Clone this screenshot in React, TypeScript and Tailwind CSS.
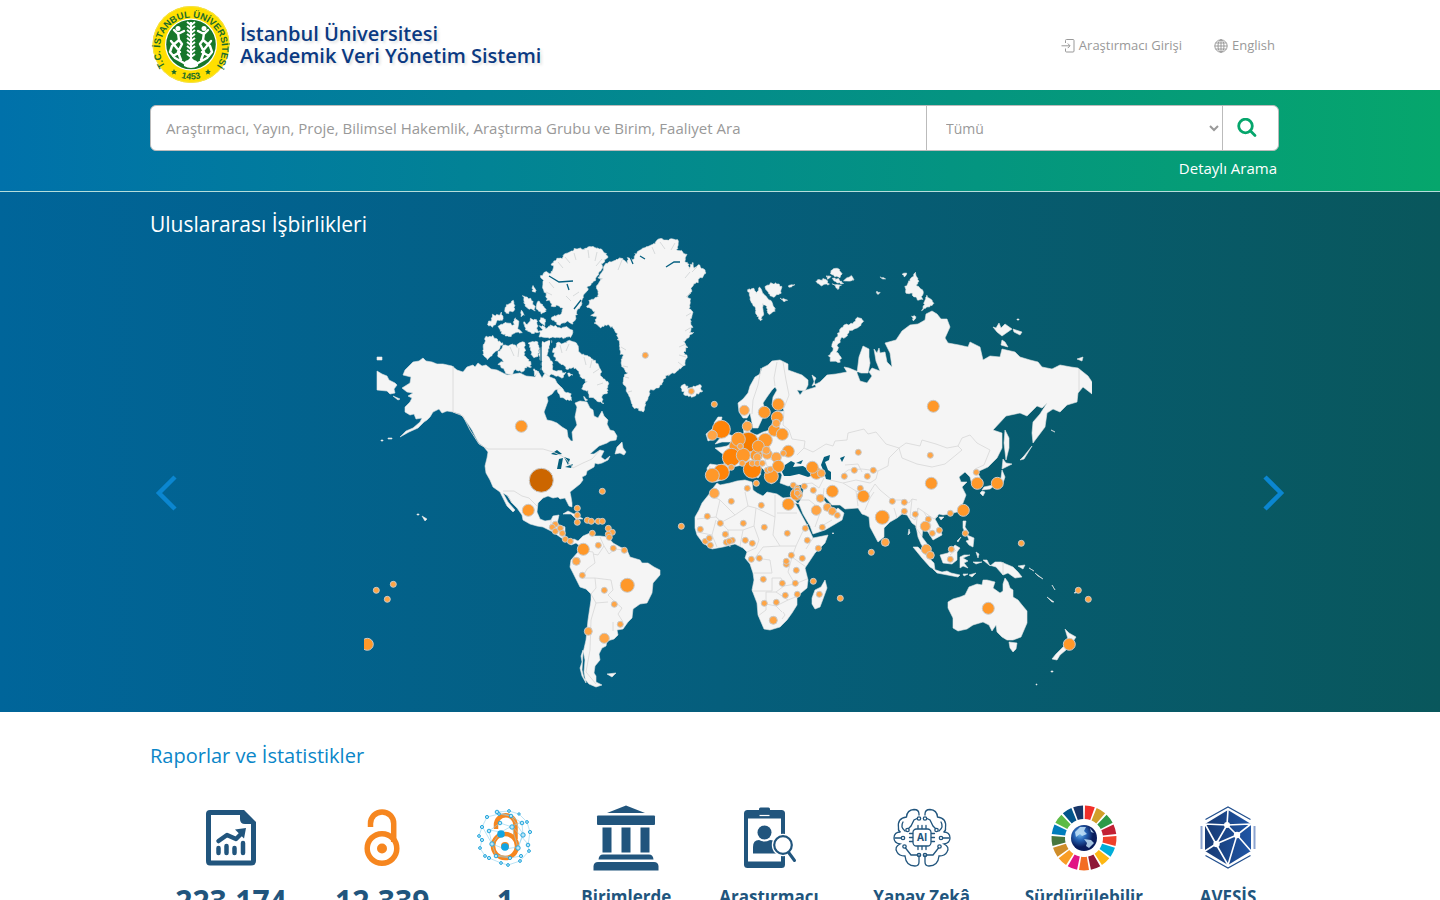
import type { ReactNode } from 'react';

type Bubble = [number, number, number];

const MAINLAND = [
  // North and South America
  'M403 375L405 370L410 365L413 362L419 361L423 358L426 361L432 362L437 364L443 364L452 366L457 370L463 372L467 367L473 365L475 367L478 363L482 366L486 365L491 369L497 370L501 372L507 375L514 374L520 373L526 376L535 377L538 371L542 378L545 373L550 377L555 379L557 383L562 388L555 390L552 394L547 397L548 401L544 412L547 420L552 421L557 423L562 427L567 430L568 437L571 441L573 441L572 432L577 425L575 417L577 407L575 403L580 401L587 402L590 408L593 410L594 416L598 418L602 411L604 416L608 420L607 424L610 430L614 431L617 436L616 440L610 441L607 443L599 446L590 454L594 454L600 450L604 451L601 457L605 460L610 456L608 460L602 463L598 464L595 463L594 467L587 471L586 475L582 477L583 480L580 484L575 488L570 492L571 497L572 503L572 507L569 506L565 498L560 499L558 497L553 498L548 496L543 498L538 503L537 512L540 519L545 521L551 520L553 516L559 515L557 524L565 527L565 535L566 540L570 541L574 539L578 541L583 536L590 533L594 536L600 536L608 537L613 543L620 547L627 550L630 557L640 560L642 563L648 563L654 567L660 570L660 575L653 583L652 593L647 603L640 604L633 609L632 618L628 622L623 629L617 630L618 635L614 639L607 641L606 646L602 648L599 654L600 660L595 666L594 673L596 676L596 682L602 685L596 687L589 684L584 678L582 670L583 653L586 640L588 620L591 600L591 594L586 589L580 587L573 573L570 567L571 560L578 552L580 546L576 543L571 545L566 541L560 537L553 532L543 527L537 526L530 524L523 520L522 515L517 508L512 503L508 496L503 493L508 502L515 510L513 512L507 506L503 498L500 492L493 487L490 480L486 473L485 466L487 458L488 452L484 447L479 443L476 438L472 430L468 424L463 417L460 414L453 412L447 411L442 413L439 409L433 412L430 417L427 420L424 422L418 428L409 432L400 437L406 431L413 428L420 422L422 418L416 419L414 414L410 415L405 412L405 407L410 402L412 398L408 396L413 393L407 392L402 388L410 383L411 377Z',
  'M377 371L382 374L387 376L389 380L395 383L397 385L394 389L395 393L390 394L387 391L377 390Z',
  'M377 357L382 357L382 360L377 360Z',
  'M393 396L400 399L398 400ZM381 440h2v1h-2ZM388 438h4v1h-4ZM417 514h2v1h-2ZM422 516L427 519L425 521Z',
  'M615 454L617 447L622 442L623 448L626 452L624 455L620 453Z',
  'M563 514L568 511L574 514L580 517L583 519L576 519L571 514ZM585 519L592 519L596 522L588 523ZM607 674L616 673L612 677Z',
  'M583 650L581 656L582 662L580 668L582 676L586 683L584 672L585 660Z',
  'M714 423L718 417L722 417L721 423L726 428L728 434L733 436L732 442L722 442L715 444L721 437L717 432ZM706 434L712 429L717 431L716 438L708 441Z',
  // Eurasia and Africa
  'M738 403L739 412L743 418L747 418L750 413L752 423L753 428L758 428L763 417L765 410L763 403L767 397L772 390L775 387L777 390L773 397L772 405L774 408L783 408L784 411L775 412L774 417L772 424L770 430L763 432L757 435L751 433L748 428L750 423L746 420L743 425L744 434L737 435L733 442L727 446L722 447L715 448L720 452L724 455L724 464L717 465L710 464L707 468L708 478L715 482L725 479L729 471L733 467L742 465L748 467L753 474L758 478L761 474L755 467L752 461L756 460L761 467L766 472L768 480L771 484L775 482L773 475L780 472L782 475L780 483L788 486L797 485L804 485L803 492L801 499L798 504L792 497L783 498L777 494L767 492L763 496L757 493L753 490L752 482L745 480L737 481L730 483L720 485L717 483L713 488L710 493L702 503L699 510L695 517L695 528L697 535L703 543L712 549L723 547L735 544L743 548L747 552L745 558L750 564L753 573L754 580L752 590L757 603L758 615L764 629L770 630L780 627L787 620L792 613L797 605L797 598L801 593L807 588L808 580L805 568L815 553L825 543L828 535L813 538L807 525L801 514L795 503L799 504L803 514L810 526L813 534L825 530L842 520L844 513L838 508L834 511L830 507L822 498L825 497L832 505L840 505L845 509L858 508L862 514L865 515L869 517L870 527L878 542L884 537L884 528L890 522L897 518L902 514L907 515L912 523L916 526L918 537L921 544L928 555L933 557L928 545L922 537L923 528L928 532L933 540L942 535L940 528L935 519L939 514L943 515L950 514L957 512L963 503L966 495L962 487L967 482L961 482L959 477L965 472L970 477L972 485L977 486L980 485L980 477L977 472L988 467L997 458L1002 448L1002 433L993 430L1006 416L1020 413L1027 416L1031 412L1037 406L1042 408L1047 403L1040 414L1033 422L1032 433L1033 443L1039 435L1045 427L1047 413L1053 409L1060 412L1067 405L1077 402L1078 393L1083 387L1092 394L1092 382L1088 376L1078 368L1071 367L1060 365L1052 369L1042 367L1038 362L1030 360L1020 357L1015 352L1002 349L1000 357L990 356L983 360L980 347L970 342L968 347L959 345L948 343L945 338L950 327L947 319L941 319L937 314L932 311L926 314L925 320L918 324L910 325L902 331L896 340L885 343L890 353L892 367L887 362L885 352L880 353L879 348L877 353L874 349L876 361L880 371L872 368L869 372L872 376L867 383L860 381L857 373L859 357L863 346L869 349L869 357L870 363L868 373L861 373L849 368L844 367L847 372L836 374L827 375L820 382L812 386L816 378L812 375L816 387L803 391L800 395L797 390L805 391L808 385L808 380L802 375L788 370L788 364L780 360L772 361L768 365L762 368L760 374L755 377L750 386L748 393L743 399Z',
  'M993 327L996 328L999 323L1001 328L1005 324L1012 329L1002 336L997 332ZM1013 329L1022 332L1020 335L1014 332ZM1002 340L1005 342L1008 347L1001 345ZM1077 359L1083 357L1082 361ZM1051 430L1055 432ZM1017 319h2v1h-2Z',
  'M1005 430L1009 438L1009 448L1006 460L1004 443ZM1003 459L1006 463L1012 464L1006 467L1002 469ZM1002 470L1005 477L1002 486L994 486L990 489L982 490L984 487L993 485L996 480L1001 478ZM982 491L985 492L983 496L980 493ZM1020 460L1024 456L1032 446L1024 459Z',
  'M825 580L827 588L823 599L820 607L815 609L812 604L812 598L815 590L821 587Z',
  'M939 517L944 517L941 520ZM909 529L910 533L908 535ZM832 533L834 533L833 534Z',
  // South-east Asia and Oceania
  'M913 547L918 547L927 556L934 563L935 570L930 567L922 558ZM933 569L942 572L947 571L951 573L960 575L958 577L937 573ZM963 574L968 574L964 576ZM969 575L976 573L972 577Z',
  'M940 555L948 553L955 545L960 548L957 552L957 560L952 564L943 563ZM960 557L964 555L970 555L963 558L968 561L964 563L968 568L963 566L960 568ZM976 552L978 558L979 554ZM973 562L982 562L976 564Z',
  'M963 521L966 521L965 527L969 533L965 532L963 528ZM957 541L961 537L958 542ZM967 535L974 538L973 547L969 545L966 541L969 540Z',
  'M983 560L987 560L990 566L995 562L1001 562L1013 567L1018 572L1022 577L1015 578L1008 573L1003 575L996 567L989 565ZM1018 566L1025 565L1023 569ZM1029 568L1034 571ZM1035 573L1043 579L1038 576ZM1052 585L1055 590ZM1047 597L1054 602L1052 602ZM1074 593L1077 591L1076 593Z',
  'M948 602L953 599L960 597L965 595L969 587L977 584L982 585L983 580L987 580L995 582L993 588L1000 593L1003 591L1003 584L1005 578L1008 582L1010 588L1013 590L1013 597L1018 600L1022 605L1027 611L1027 623L1021 637L1013 640L1007 640L1002 637L997 632L996 625L992 631L989 625L983 622L973 625L967 629L958 631L953 628L953 618L948 608Z',
  'M1009 642L1017 643L1016 649L1013 652L1010 648ZM1065 629L1069 633L1076 637L1072 643L1068 639ZM1065 645L1066 650L1060 655L1057 660L1052 659L1056 654ZM1051 671h2v1h-2ZM1036 684h1v1h-1Z',
].join('');

// Coasts cut by fjords: Greenland, the Canadian Arctic, Iceland, Svalbard, Novaya Zemlya
const ARCTIC = [
  'M608 263L615 260L622 258L627 263L628 258L634 260L635 254L645 247L652 245L660 239L677 240L679 245L677 249L682 251L687 255L684 261L688 263L689 269L692 262L694 269L698 265L706 271L702 277L697 283L693 284L691 292L688 297L691 302L689 308L693 312L690 319L692 327L689 332L693 333L687 338L684 342L687 347L684 353L687 356L685 365L675 372L665 377L662 385L660 387L650 390L649 398L645 405L643 412L638 409L633 407L628 395L626 387L623 383L624 376L627 373L624 369L621 365L622 360L624 354L621 355L618 340L617 334L613 328L608 325L600 327L595 323L597 317L590 315L596 312L587 307L590 300L598 297L597 285L602 279L598 278L602 273L603 267Z',
  'M552 265L556 259L562 258L564 253L570 252L575 249L581 249L590 247L598 248L605 252L608 258L602 264L602 270L597 276L593 283L588 286L587 290L584 296L582 302L578 310L577 315L574 320L573 324L567 322L560 325L555 322L551 318L560 314L563 309L558 306L552 306L550 302L547 300L546 294L542 288L543 280L541 276L545 272L551 273L554 269Z',
  'M540 325L546 328L551 325L560 328L566 326L573 330L572 337L556 338L540 337L539 331L543 330Z',
  'M523 295L527 298L530 298L533 303L535 310L529 309L524 303ZM537 301L541 303L545 308L546 312L541 314L537 308ZM521 311L524 315L521 316ZM533 286L536 291L533 292Z',
  'M498 327L507 322L513 325L515 318L518 321L518 328L522 332L515 333L510 337L502 333Z',
  'M488 325L491 319L493 315L499 315L502 313L503 320L498 321L493 327ZM505 308L509 303L514 301L515 310L508 313L504 311Z',
  'M523 322L528 325L531 319L537 320L538 332L532 333L526 329ZM540 318L546 319L545 325L540 323Z',
  'M485 337L493 336L498 341L503 343L498 350L494 353L488 359L483 355Z',
  'M497 355L503 345L508 346L512 344L517 347L519 343L524 342L525 355L530 362L531 367L526 367L522 373L516 369L511 375L505 372L498 363L503 361Z',
  'M529 344L533 341L538 342L539 350L537 357L533 357ZM542 342L552 340L549 348L547 357L553 363L553 370L560 371L566 373L562 378L553 374L548 376L541 370L542 362L539 357Z',
  'M553 350L557 344L560 342L563 344L569 341L577 343L578 350L583 355L589 356L597 363L601 371L600 374L608 383L607 387L608 393L602 396L603 404L596 400L590 397L588 391L582 390L583 385L587 382L581 377L579 371L573 367L568 369L563 365L556 361Z',
  'M557 390L562 387L565 391L570 393L572 400L566 400L560 397ZM568 372L572 374L570 377ZM583 396L588 400L585 401ZM533 369L538 370L535 375Z',
  'M681 387L684 384L688 388L695 386L700 384L702 391L692 397L684 394Z',
  'M748 290L754 289L756 294L760 287L764 295L770 300L775 308L775 312L768 314L767 306L763 304L764 311L761 321L757 315L755 308L751 303ZM765 287L771 283L777 284L782 288L780 294L773 297L768 293ZM788 286L794 285L790 288ZM781 299L787 300L783 302Z',
  'M815 282L820 279L826 280L829 284L822 286ZM830 271L838 268L842 274L840 277L832 275ZM844 280L851 276L854 280L848 282ZM833 279L839 278L843 284L838 283ZM832 284L842 285L838 289ZM826 276L830 277L828 280Z',
  'M862 318L863 322L858 327L850 330L847 336L842 338L838 345L837 352L841 357L840 362L832 362L828 355L833 351L832 345L837 336L840 329L845 325L853 323L857 318Z',
  'M915 273L919 282L916 286L923 289L922 299L919 301L914 296L912 293L905 293L905 288L908 283ZM903 274L907 274L905 277ZM927 295L931 300L934 303L929 307L922 310ZM880 277L885 278L882 279ZM876 292L880 293L878 294ZM912 317L916 316L914 321Z',
].join('');

const INLAND_WATER =
  'M551 454L557 450L562 454L556 455ZM557 469L559 459L563 458L561 469ZM564 457L570 459L568 465ZM565 467L573 464L571 468ZM782 472L785 465L791 461L795 463L793 467L803 466L809 470L816 474L808 477L799 474L790 476L784 476ZM796 463L803 460L801 464ZM821 465L824 457L830 455L829 460L825 462L828 470L831 472L831 480L826 479L824 472ZM840 458L845 456L842 462Z';

const CHANNELS =
  'M549 276L559 282L573 281M567 284L569 290M551 338L550 351M541 338L541 372M581 300L574 309M666 267L674 262L680 262M640 256L645 259M690 355L684 352M630 257L633 264';

const FJORDS =
  'M558 262L563 268M565 257L570 263M574 253L576 260M588 250L589 258M597 252L595 261M602 259L596 266M549 282L554 288M546 292L552 295M579 292L573 296M566 296L571 301M622 260L618 270M652 247L655 254M660 242L665 249M675 243L671 250M690 272L685 278M697 267L692 272M691 293L686 297M691 313L686 316M690 328L685 331M686 344L679 347M686 357L679 355M683 366L678 362M621 347L626 350M623 366L628 367M625 377L629 378M628 392L632 391M584 357L586 365M592 360L590 368M599 369L593 373M603 383L597 385M569 344L566 351M560 345L562 353M510 347L514 356M519 348L518 357';

const BORDERS =
  'M453 366V412M453 412L463 416L470 430L479 444L488 449H543L553 452L562 456L566 459L573 468L583 463L592 459L600 450M503 491H514L522 496L529 498L537 506M512 503L507 495M551 520V528M565 527L557 530M580 546L586 551L593 552L595 563L587 569L582 578M600 537L604 546L598 555L593 554M604 546L609 554L615 549L624 550M582 578L595 578L611 580L613 590L608 595L613 600L622 608L618 614L623 622M591 594L596 603L608 602M596 603L591 620L590 650L586 672L596 684M595 578L596 588L591 594M613 622V631' +
  'M710 495L720 500L735 515L748 506L745 492M720 500L716 517L697 519M716 517L722 522L735 515M748 506L756 508L775 517V495M756 508L754 526L743 530H728L716 517M777 513H797M775 517L773 535L780 546L796 546L802 533L808 524M754 526L759 540L756 548L747 552M780 546L763 547L755 558L770 560L772 573H754M796 546L792 557L806 567M792 557L788 572L795 584L784 586L781 578H772V591H752M795 584L807 579M784 586L776 592L788 600L798 596M776 592H766V610L758 616M766 604L776 606L788 600M776 606L782 612M813 538L806 549M743 530L740 546M728 530L730 547M716 520L712 535L697 532M712 535L717 547M783 612L785 615L782 619' +
  'M761 368L758 385L753 400L752 414M777 362L774 378L775 386M783 362L786 380L789 395L784 408M784 411L783 425L789 430L792 439L805 441L804 448L797 455M770 430L770 446L760 450L748 447L743 436M760 450L770 459L782 465M748 447L739 452L724 458M710 466L708 478M724 464L730 468M748 447L749 459L752 465M763 452L767 466L777 471M775 459L780 467M804 448L813 452L826 444L833 446L835 441L847 440L848 433L864 429L868 434L876 432L886 444L899 448L889 458L888 466L878 471L862 469L848 470L842 475M845 465L858 464L862 472M830 480L843 483L856 491L858 506M824 478L819 488L812 483L804 484M824 488L823 498M812 490L822 502M800 500L809 500L819 508M843 483L856 480L870 483L876 479L878 471M856 491L868 495L875 484L880 490L892 500H903L909 503L912 499L917 500M865 510L870 498L874 492M899 448L906 443L920 446L922 440L936 444L947 448L958 446L962 450L956 455L945 464L932 467L917 464L902 458L899 448M958 446L962 438L970 435L977 443L990 450L984 465L975 469M894 508L897 518L902 513M912 499L910 517L915 520L918 508L924 512L934 519L938 516M918 508L916 528L922 536M924 512L931 525L929 532M820 513L815 527M820 527L832 520M1003 562V575M950 555L956 550M1079 369V391';

const BUBBLES: Bubble[] = [
  [541, 480, 12], [521, 426, 6], [528, 510, 6], [645, 355, 3], [602, 491, 3], [691, 391, 3], [714, 404, 3],
  [367, 644, 6], [376, 590, 3], [393, 584, 3], [387, 599, 3], [681, 526, 3],
  [577, 508, 3], [577, 515, 3], [577, 522, 3], [587, 520, 3], [591, 521, 3], [598, 521, 3], [602, 521, 3],
  [555, 524, 3], [552, 527, 3], [555, 531, 3], [560, 528, 3], [562, 533, 3], [565, 539, 3], [570, 541, 3],
  [608, 528, 3], [612, 532, 3], [608, 534, 3], [609, 537, 3], [592, 533, 3], [598, 545, 3], [613, 548, 3], [624, 550, 3],
  [583, 549, 6], [576, 561, 4], [582, 575, 3], [604, 590, 3], [614, 604, 3], [627, 585, 7], [620, 624, 3], [588, 631, 4], [604, 638, 5],
  [748, 442, 10], [721, 429, 9], [712, 435, 5], [744, 410, 5], [764, 412, 6], [778, 404, 6], [777, 417, 6], [774, 430, 6], [776, 423, 4],
  [782, 434, 6], [747, 426, 5], [736, 446, 7], [738, 439, 7], [765, 440, 7], [731, 457, 9], [756, 455, 6],
  [758, 446, 6], [767, 454, 5], [766, 450, 4], [752, 469, 9], [743, 455, 7], [740, 446, 3], [742, 463, 3], [752, 463, 3],
  [757, 457, 4], [757, 463, 3], [762, 463, 3], [776, 457, 5], [788, 451, 6], [783, 453, 3], [778, 466, 6], [771, 476, 7],
  [767, 470, 3], [770, 469, 3], [721, 472, 8], [712, 475, 7], [731, 467, 3], [756, 483, 3],
  [714, 493, 5], [747, 488, 3], [731, 501, 3], [761, 505, 3], [788, 504, 6], [707, 516, 3], [720, 523, 3], [743, 523, 3],
  [764, 527, 3], [787, 533, 3], [805, 528, 3], [807, 540, 3], [700, 529, 3], [705, 541, 3], [709, 538, 3], [710, 545, 3],
  [725, 534, 3], [726, 542, 3], [732, 540, 3], [729, 541, 3], [745, 540, 3], [752, 543, 3], [751, 559, 3], [759, 558, 3],
  [791, 555, 3], [802, 558, 3], [786, 564, 3], [786, 561, 3], [796, 570, 3], [763, 579, 3], [782, 583, 3], [795, 583, 3],
  [785, 595, 3], [797, 594, 3], [764, 603, 3], [776, 602, 3], [773, 620, 4], [818, 548, 3], [813, 581, 3], [819, 594, 3], [840, 598, 3],
  [933, 406, 6], [858, 452, 3], [930, 455, 3], [931, 483, 6], [816, 473, 6], [812, 467, 6], [821, 473, 4], [793, 485, 3],
  [797, 488, 3], [796, 494, 6], [797, 490, 3], [799, 495, 3], [797, 493, 3], [804, 486, 3], [813, 490, 3], [820, 498, 4],
  [832, 491, 6], [844, 476, 3], [854, 470, 3], [867, 476, 3], [873, 470, 3], [860, 488, 3], [863, 496, 6],
  [816, 510, 5], [827, 507, 4], [832, 511, 4], [837, 515, 3], [822, 527, 3], [892, 501, 3], [904, 502, 3], [904, 511, 3],
  [882, 517, 7], [885, 542, 4], [871, 552, 3], [915, 514, 3], [928, 519, 3], [925, 526, 5], [932, 533, 3], [939, 530, 3],
  [950, 513, 3], [963, 510, 6], [976, 472, 3], [977, 483, 6], [997, 483, 6], [965, 533, 3], [926, 549, 5], [930, 555, 4],
  [951, 549, 3], [950, 559, 3], [1021, 543, 3], [988, 608, 6], [1069, 644, 6], [1078, 590, 3], [1088, 599, 3],
];

function bubbleColor(r: number) {
  if (r > 10) return '#cc6600';
  if (r > 9) return '#f57c00';
  if (r > 7) return '#ff8307';
  if (r > 5) return '#ff9829';
  return '#ffa545';
}

// Splits each edge into short steps and nudges them sideways, the same way every time
function roughen(path: string) {
  let seed = 7;
  const random = () => {
    seed = (seed * 16807) % 2147483647;
    return seed / 2147483647 - 0.5;
  };
  return path
    .split('Z')
    .filter(Boolean)
    .map((ring) => {
      const points = ring.slice(1).split('L').map((pair) => pair.split(' ').map(Number));
      const out: string[] = [];
      points.forEach(([x, y], i) => {
        const [nx, ny] = points[(i + 1) % points.length];
        const steps = Math.max(1, Math.round(Math.hypot(nx - x, ny - y) / 1.6));
        for (let s = 0; s < steps; s++) {
          const t = s / steps;
          const px = x + (nx - x) * t + random() * 2;
          const py = y + (ny - y) * t + random() * 2;
          out.push(`${px.toFixed(1)} ${py.toFixed(1)}`);
        }
      });
      return `M${out.join('L')}Z`;
    })
    .join('');
}

const LAND = MAINLAND + roughen(ARCTIC);

function WorldMap() {
  return (
    <svg viewBox="364 238 728 454" className="ml-4 block w-full max-w-[728px]" role="img" aria-label="Uluslararası İşbirlikleri">
      <path d={LAND} fill="#f5f5f5" stroke="#e4e6e6" strokeWidth="0.6" strokeLinejoin="round" />
      <path d={INLAND_WATER} fill="#055f7c" />
      <path d={CHANNELS} fill="none" stroke="#055f80" strokeWidth="1.3" />
      <path d={FJORDS} fill="none" stroke="#cfd3d4" strokeWidth="0.8" />
      <path d={BORDERS} fill="none" stroke="#dadada" strokeWidth="0.9" strokeLinejoin="round" />
      {BUBBLES.map(([x, y, r], i) => (
        <circle key={i} cx={x + 0.3} cy={y + 0.3} r={r} fill={bubbleColor(r)} stroke="#c9c9c9" strokeWidth="1" />
      ))}
    </svg>
  );
}

function UniversityLogo() {
  return (
    <svg viewBox="0 0 80 80" className="h-20 w-20 shrink-0" aria-hidden="true">
      <defs>
        <path id="seal-top" d="M18.500 65A31 31 0 1 1 63.500 65" />
        <path id="seal-bottom" d="M19 66.500A34.500 34.500 0 0 0 63 66.500" />
      </defs>
      <circle cx="41" cy="39.500" r="38.500" fill="#ffdf00" />
      <circle cx="41" cy="39.500" r="38" fill="none" stroke="#f5e24a" />
      <text fontFamily="Liberation Sans, sans-serif" fontSize="9.400" fontWeight="700" fill="#1b6b2a">
        <textPath href="#seal-top" startOffset="50%" textAnchor="middle">T.C. İSTANBUL ÜNİVERSİTESİ</textPath>
      </text>
      <text fontFamily="Liberation Sans, sans-serif" fontSize="9" fontWeight="700" fill="#1b6b2a">
        <textPath href="#seal-bottom" startOffset="50%" textAnchor="middle">1453</textPath>
      </text>
      <path d="M24 64l.9 1.900 2 .2-1.500 1.400.4 2-1.800-1-1.800 1 .4-2-1.500-1.400 2-.2ZM58 64l.9 1.900 2 .2-1.500 1.400.4 2-1.800-1-1.800 1 .4-2-1.500-1.400 2-.2Z" fill="#1b6b2a" />
      <circle cx="41" cy="39.500" r="26" fill="#fff" />
      <circle cx="41" cy="39.500" r="24.800" fill="#17772a" />
      <g transform="translate(1 0)">
        <path d="M40 17V60" stroke="#fff" strokeWidth="2" />
        <path d="M36 17l4 3 4-3M36 21l4 3 4-3M36 25l4 3 4-3M36 29l4 3 4-3M36 33l4 3 4-3M36 37l4 3 4-3M36 41l4 3 4-3M36 45l4 3 4-3M36 49l4 3 4-3" fill="none" stroke="#fff" strokeWidth="2" />
        <path d="M33 61Q32 56 37 55L40 52L43 55Q48 56 47 61Q40 65 33 61Z" fill="#fff" />
        <g fill="none" stroke="#fff" strokeWidth="2.400" strokeLinecap="round" strokeLinejoin="round">
          <path d="M23 25l4 4 6-3M27 28l1 7-7 6-2 6 5 6 9 5M28 35l3 4-4 8 3 8M20 36l9 11-7 4" />
          <path d="M57 25l-4 4-6-3M53 28l-1 7 7 6 2 6-5 6-9 5M52 35l-3 4 4 8-3 8M60 36l-9 11 7 4" />
        </g>
        <circle cx="27" cy="23.500" r="2.500" fill="#fff" />
        <circle cx="53" cy="23.500" r="2.500" fill="#fff" />
      </g>
    </svg>
  );
}

function LoginIcon() {
  return (
    <svg viewBox="0 0 14 14" className="h-3.5 w-3.5" fill="none" stroke="#999" strokeWidth="1" aria-hidden="true">
      <path d="M4.500 4V1.500Q4.500 .5 5.500 .5H12Q13 .5 13 1.500V12Q13 13 12 13H5.500Q4.500 13 4.500 12V9.500M.5 6.800H9M6.800 4.500L9 6.800L6.800 9.100" />
    </svg>
  );
}

function GlobeIcon() {
  return (
    <svg viewBox="0 0 14 14" className="h-3.5 w-3.5" fill="none" stroke="#888" strokeWidth="0.8" aria-hidden="true">
      <circle cx="7" cy="7" r="6.200" />
      <ellipse cx="7" cy="7" rx="3" ry="6.200" />
      <path d="M7 .8V13.200M.8 7H13.200M1.600 4H12.400M1.600 10H12.400" />
    </svg>
  );
}

function SearchIcon() {
  return (
    <svg viewBox="0 0 20 20" className="h-5 w-5" fill="none" stroke="#06a66c" strokeWidth="2.800" aria-hidden="true">
      <circle cx="8.500" cy="8" r="6.800" />
      <path d="M13.300 12.800L18 17.500" strokeLinecap="round" />
    </svg>
  );
}

function ReportIcon() {
  return (
    <svg viewBox="0 0 66 66" className="h-[66px] w-[66px]" aria-hidden="true">
      <path d="M12 7.500H45L55.500 18V56Q55.500 58 53 58H12Q10.500 58 10.500 56V9Q10.500 7.500 12 7.500Z" fill="none" stroke="#21557d" strokeWidth="5" />
      <path d="M42 6V14Q42 19 47 19H57L44 5Z" fill="#21557d" />
      <path d="M20.500 43V48M28.500 41V48M36.500 43V48M45 38V48" stroke="#21557d" strokeWidth="4.500" strokeLinecap="round" />
      <path d="M20.500 36L29 30L38 34L43 29" fill="none" stroke="#21557d" strokeWidth="4.500" strokeLinecap="round" strokeLinejoin="round" />
      <path d="M37 24.500L48 23L46 33.500Z" fill="#21557d" />
    </svg>
  );
}

function OpenAccessIcon() {
  return (
    <svg viewBox="0 0 66 66" className="h-[66px] w-[66px]" aria-hidden="true">
      <g fill="none" stroke="#f6861f" strokeWidth="5.500">
        <circle cx="33" cy="43.500" r="14.800" />
        <path d="M21.500 22V18.500A11.600 11.600 0 0 1 44.700 18.500V37" />
      </g>
      <circle cx="33" cy="43.500" r="5" fill="#f6861f" />
    </svg>
  );
}

const NODES: Bubble[] = [
  [20, 7, 1.8], [32, 6, 1.4], [42, 9, 1.2], [50, 17, 1.4], [53, 27, 1.6], [51, 40, 1.8], [52, 46, 1.4], [43, 56, 1.4],
  [31, 60, 1.4], [24, 58, 1.4], [12, 53, 1.6], [8, 51, 1.4], [3, 43, 1.4], [5, 35, 1.6], [2, 31, 1.4], [5, 22, 1.6],
  [10, 12, 1.6], [22, 9, 1.4], [34, 11, 1.8], [45, 18, 1.8], [46, 30, 2.2], [41, 43, 2.2], [35, 22, 2.2], [23, 18, 1.8],
  [12, 26, 1.8], [15, 39, 2.2], [19, 51, 1.8], [33, 53, 1.6], [44, 51, 1.6],
];

function NetworkIcon() {
  return (
    <svg viewBox="0 0 56 66" className="h-[66px] w-14" aria-hidden="true">
      <g fill="none" stroke="#f6861f" strokeWidth="4.500">
        <circle cx="28" cy="41" r="12" />
        <path d="M19 24V20A9.500 9.500 0 0 1 38.500 20V34" />
      </g>
      <circle cx="28" cy="41" r="4" fill="#f6861f" />
      <g fill="none" stroke="#8fd0ec" strokeWidth="0.6">
        <path d={NODES.map(([x, y], i) => `${i ? 'L' : 'M'}${x} ${y}`).join('')} />
        <path d="M20 7L34 11L46 29L41 42L28 44L15 39L24 27L35 21L51 39M12 25L24 27M15 39L5 21M45 17L35 21M19 50L33 52" />
      </g>
      {NODES.map(([x, y, r], i) => (
        <circle key={i} cx={x} cy={y} r={r} fill="#b9e5f7" stroke="#27a7dd" strokeWidth="1" />
      ))}
      <circle cx="24" cy="29" r="3.800" fill="#12a5e3" />
      <circle cx="28" cy="42" r="3.800" fill="#12a5e3" />
    </svg>
  );
}

function InstitutionIcon() {
  return (
    <svg viewBox="0 0 66 66" className="h-[66px] w-[66px]" fill="#21557d" aria-hidden="true">
      <path d="M14 8L33 .5L52 8Z" />
      <rect x="4" y="10.500" width="58" height="9.500" rx="1" />
      <path d="M9.500 22.500h9v25h-9ZM28.500 22.500h9v25h-9ZM47.500 22.500h9v25h-9Z" />
      <path d="M10 49.500H56Q60 49.500 60.500 54.500H5.500Q6 49.500 10 49.500ZM5 57H61Q65 57 65.500 61V65.500H.5V61Q1 57 5 57Z" />
    </svg>
  );
}

function ResearcherIcon() {
  return (
    <svg viewBox="0 0 66 66" className="h-[66px] w-[66px]" aria-hidden="true">
      <rect x="8" y="5" width="41" height="58" rx="3.500" fill="#21557d" />
      <rect x="23" y="2.500" width="11" height="5" rx="1.500" fill="#21557d" />
      <path d="M23.500 10.500H33.500" stroke="#fff" strokeWidth="1.200" />
      <rect x="12" y="13.500" width="33" height="43" fill="#fff" />
      <circle cx="28.500" cy="27.500" r="7" fill="#21557d" />
      <path d="M17 48.500V42Q17 35 23 35Q28 38 34 35Q42 35 42 43V48.500Z" fill="#21557d" />
      <circle cx="47" cy="40" r="11.200" fill="#fff" />
      <circle cx="47" cy="40" r="8.800" fill="#fff" stroke="#21557d" strokeWidth="2.200" />
      <path d="M53 48L58.500 55.500" stroke="#21557d" strokeWidth="3" strokeLinecap="round" />
    </svg>
  );
}

function AiBrainIcon() {
  return (
    <svg viewBox="0 0 66 66" className="h-[66px] w-[66px]" fill="none" stroke="#21557d" strokeWidth="1.300" strokeLinecap="round" aria-hidden="true">
      <rect x="24" y="24" width="18" height="17" rx="3.500" />
      <text x="33" y="36" textAnchor="middle" fontFamily="Inter, sans-serif" fontSize="10" fill="#21557d" stroke="none">AI</text>
      <path d="M29 23.500v-3M33 23.500v-3M37 23.500v-3M29 41.500v3M33 41.500v3M37 41.500v3M23.500 28.500h-3M23.500 32.500h-3M23.500 36.500h-3M42.500 28.500h3M42.500 32.500h3M42.500 36.500h3" />
      <g id="brain-half">
        <path d="M30 10V9Q30 4.500 25 4.500Q18 5 17.500 12Q8 13 9.500 23Q9 26 11.500 27Q5 27 5 33Q5 38 11 39Q5 42 8 47Q10 51 16 51Q17 61 26 61Q30 61 30 57V50" />
        <path d="M14 17Q11 22 16 26" />
        <circle cx="30" cy="13.500" r="1.700" />
        <circle cx="18.500" cy="25" r="1.700" />
        <circle cx="14" cy="33" r="1.700" />
        <circle cx="15.500" cy="41.500" r="1.700" />
        <circle cx="30" cy="50" r="1.700" />
        <path d="M28 13.500L25 15L22 21L19.500 23.500M12 33H6M16.500 43L22 50H28" />
      </g>
      <use href="#brain-half" transform="translate(66 0) scale(-1 1)" />
    </svg>
  );
}

const SDG_COLORS = [
  '#f2302a', '#d19f2a', '#2d9a47', '#c22033', '#ef412a', '#00add8', '#fdb713', '#8f1838', '#f36d25',
  '#e11484', '#f99d26', '#cf8d2a', '#48773e', '#007dbc', '#5dbb46', '#02558b', '#183668',
];

function SdgIcon() {
  const step = 360 / SDG_COLORS.length;
  return (
    <svg viewBox="0 0 66 66" className="h-[66px] w-[66px]" aria-hidden="true">
      <defs>
        <radialGradient id="earth" cx="35%" cy="35%">
          <stop offset="0" stopColor="#74b9ee" />
          <stop offset="0.45" stopColor="#2767b8" />
          <stop offset="1" stopColor="#081c5c" />
        </radialGradient>
      </defs>
      {SDG_COLORS.map((color, i) => (
        <path key={color} d="M28 .9A32.500 32.500 0 0 1 38 .9L35.800 14.200A19 19 0 0 0 30.200 14.200Z" fill={color} transform={`rotate(${(i + 0.5) * step} 33 33)`} />
      ))}
      <circle cx="33" cy="33" r="13" fill="url(#earth)" />
      <path d="M24 27L29 22L35 22L33 26L36 29L31 31L29 29L25 32ZM33 34L40 35L43 38L38 43L35 41L36 38ZM39 23L43 28L40 27Z" fill="#c3e3f8" opacity="0.85" />
    </svg>
  );
}

function AvesisIcon() {
  return (
    <svg viewBox="0 0 66 66" className="h-[66px] w-[66px]" aria-hidden="true">
      <defs>
        <linearGradient id="hex">
          <stop offset="0" stopColor="#173a73" />
          <stop offset="1" stopColor="#1f55a5" />
        </linearGradient>
      </defs>
      <path d="M33 5L56 19V46L33 60L10 46V19Z" fill="url(#hex)" />
      <path d="M10.500 14.500L33 2L55.500 14.500M10.500 50.500L33 63L55.500 50.500" fill="none" stroke="#22508f" strokeWidth="1.200" />
      <path d="M6.500 21V44M59.500 21V44" stroke="#8ba3d0" strokeWidth="2" />
      <g stroke="#fff" strokeWidth="1.600" fill="none">
        <path d="M10 19L32 20L56 19M32 20L33 5M32 20L42 30L56 19M32 20L21 39L10 19M21 39L42 30L33 60L21 39L10 46M42 30L56 46" />
      </g>
      <circle cx="32" cy="20" r="3" fill="#fff" />
      <circle cx="42" cy="30" r="3.200" fill="#fff" />
      <circle cx="21.500" cy="39" r="3.200" fill="#fff" />
    </svg>
  );
}

interface ReportItem {
  label: string;
  icon: ReactNode;
  numeric?: boolean;
  width: string;
}

const REPORTS: ReportItem[] = [
  { label: '223.174', icon: <ReportIcon />, numeric: true, width: 'min-w-28' },
  { label: '12.339', icon: <OpenAccessIcon />, numeric: true, width: 'min-w-[94px]' },
  { label: '1', icon: <NetworkIcon />, numeric: true, width: 'min-w-14' },
  { label: 'Birimlerde', icon: <InstitutionIcon />, width: 'min-w-[88px]' },
  { label: 'Araştırmacı', icon: <ResearcherIcon />, width: 'min-w-[98px]' },
  { label: 'Yapay Zekâ', icon: <AiBrainIcon />, width: 'min-w-[110px]' },
  { label: 'Sürdürülebilir', icon: <SdgIcon />, width: 'min-w-[116px]' },
  { label: 'AVESİS', icon: <AvesisIcon />, width: 'min-w-[74px]' },
];

function Arrow({ direction }: { direction: 'left' | 'right' }) {
  return (
    <button type="button" aria-label={direction === 'left' ? 'Önceki' : 'Sonraki'} className="mt-14 cursor-pointer p-1">
      <svg viewBox="0 0 22 36" className="h-9 w-[22px]" fill="none" stroke="#0b86d0" strokeWidth="4.500">
        <path d={direction === 'left' ? 'M20 2L4 18L20 34' : 'M2 2L18 18L2 34'} />
      </svg>
    </button>
  );
}

export default function App() {
  return (
    <div className="min-h-screen bg-white font-['Open_Sans',sans-serif]">
      <header className="mx-auto flex h-[90px] max-w-[1140px] items-center justify-between">
        <a href="#" className="flex items-center gap-2.5">
          <UniversityLogo />
          <span className="text-xl leading-[22px] font-semibold text-[#0b3a82] [text-shadow:2px_2px_3px_rgba(0,0,0,0.12)]">
            İstanbul Üniversitesi
            <br />
            Akademik Veri Yönetim Sistemi
          </span>
        </a>
        <nav className="flex gap-8 pt-0.5 pr-[15px] text-[13px] text-[#999]">
          <a href="#" className="flex items-center gap-1">
            <LoginIcon />
            Araştırmacı Girişi
          </a>
          <a href="#" className="flex items-center gap-1">
            <GlobeIcon />
            English
          </a>
        </nav>
      </header>

      <div className="border-b border-[#b5dedb] bg-linear-to-r/srgb from-[#0071aa] to-[#06a66c]">
        <div className="mx-auto max-w-[1140px] pt-[15px] pr-[11px] pb-3">
          <form className="flex h-[46px] overflow-hidden rounded-md border border-[#bbb] bg-white" onSubmit={(e) => e.preventDefault()}>
            <input
              type="text"
              aria-label="Ara"
              placeholder="Araştırmacı, Yayın, Proje, Bilimsel Hakemlik, Araştırma Grubu ve Birim, Faaliyet Ara"
              className="min-w-0 flex-1 px-[15px] text-[15px] text-[#555] outline-none placeholder:text-[#999]"
            />
            <select aria-label="Kategori" className="w-[297px] border-x border-[#bbb] bg-white pl-[15px] text-sm text-[#999] outline-none">
              <option>Tümü</option>
            </select>
            <button type="submit" aria-label="Ara" className="flex w-[55px] cursor-pointer items-center pb-px pl-3.5">
              <SearchIcon />
            </button>
          </form>
          <div className="mt-1.5 text-right text-[15px] leading-[22px] text-white">
            <a href="#" className="pr-0.5">Detaylı Arama</a>
          </div>
        </div>
      </div>

      <section className="bg-linear-to-r/srgb from-[#00659a] via-[#055e7c] to-[#09575c] pb-5">
        <div className="mx-auto max-w-[1140px] pt-4">
          <h2 className="text-[21px] leading-8 text-white">Uluslararası İşbirlikleri</h2>
          <div className="-mt-0.5 flex items-center justify-between px-px">
            <Arrow direction="left" />
            <WorldMap />
            <Arrow direction="right" />
          </div>
        </div>
      </section>

      <section className="mx-auto max-w-[1140px] pt-7">
        <h2 className="text-xl leading-8 text-[#0a86c8]">Raporlar ve İstatistikler</h2>
        <ul className="mt-[33px] flex justify-center gap-12">
          {REPORTS.map((item) => (
            <li key={item.label} className={item.width}>
              <a href="#" className="flex flex-col items-center font-bold text-[#21557d]">
                {item.icon}
                <span className={item.numeric ? 'mt-3 text-[30px] leading-9' : 'mt-3.5 text-[17px] leading-6'}>
                  {item.label}
                </span>
              </a>
            </li>
          ))}
        </ul>
      </section>
    </div>
  );
}
